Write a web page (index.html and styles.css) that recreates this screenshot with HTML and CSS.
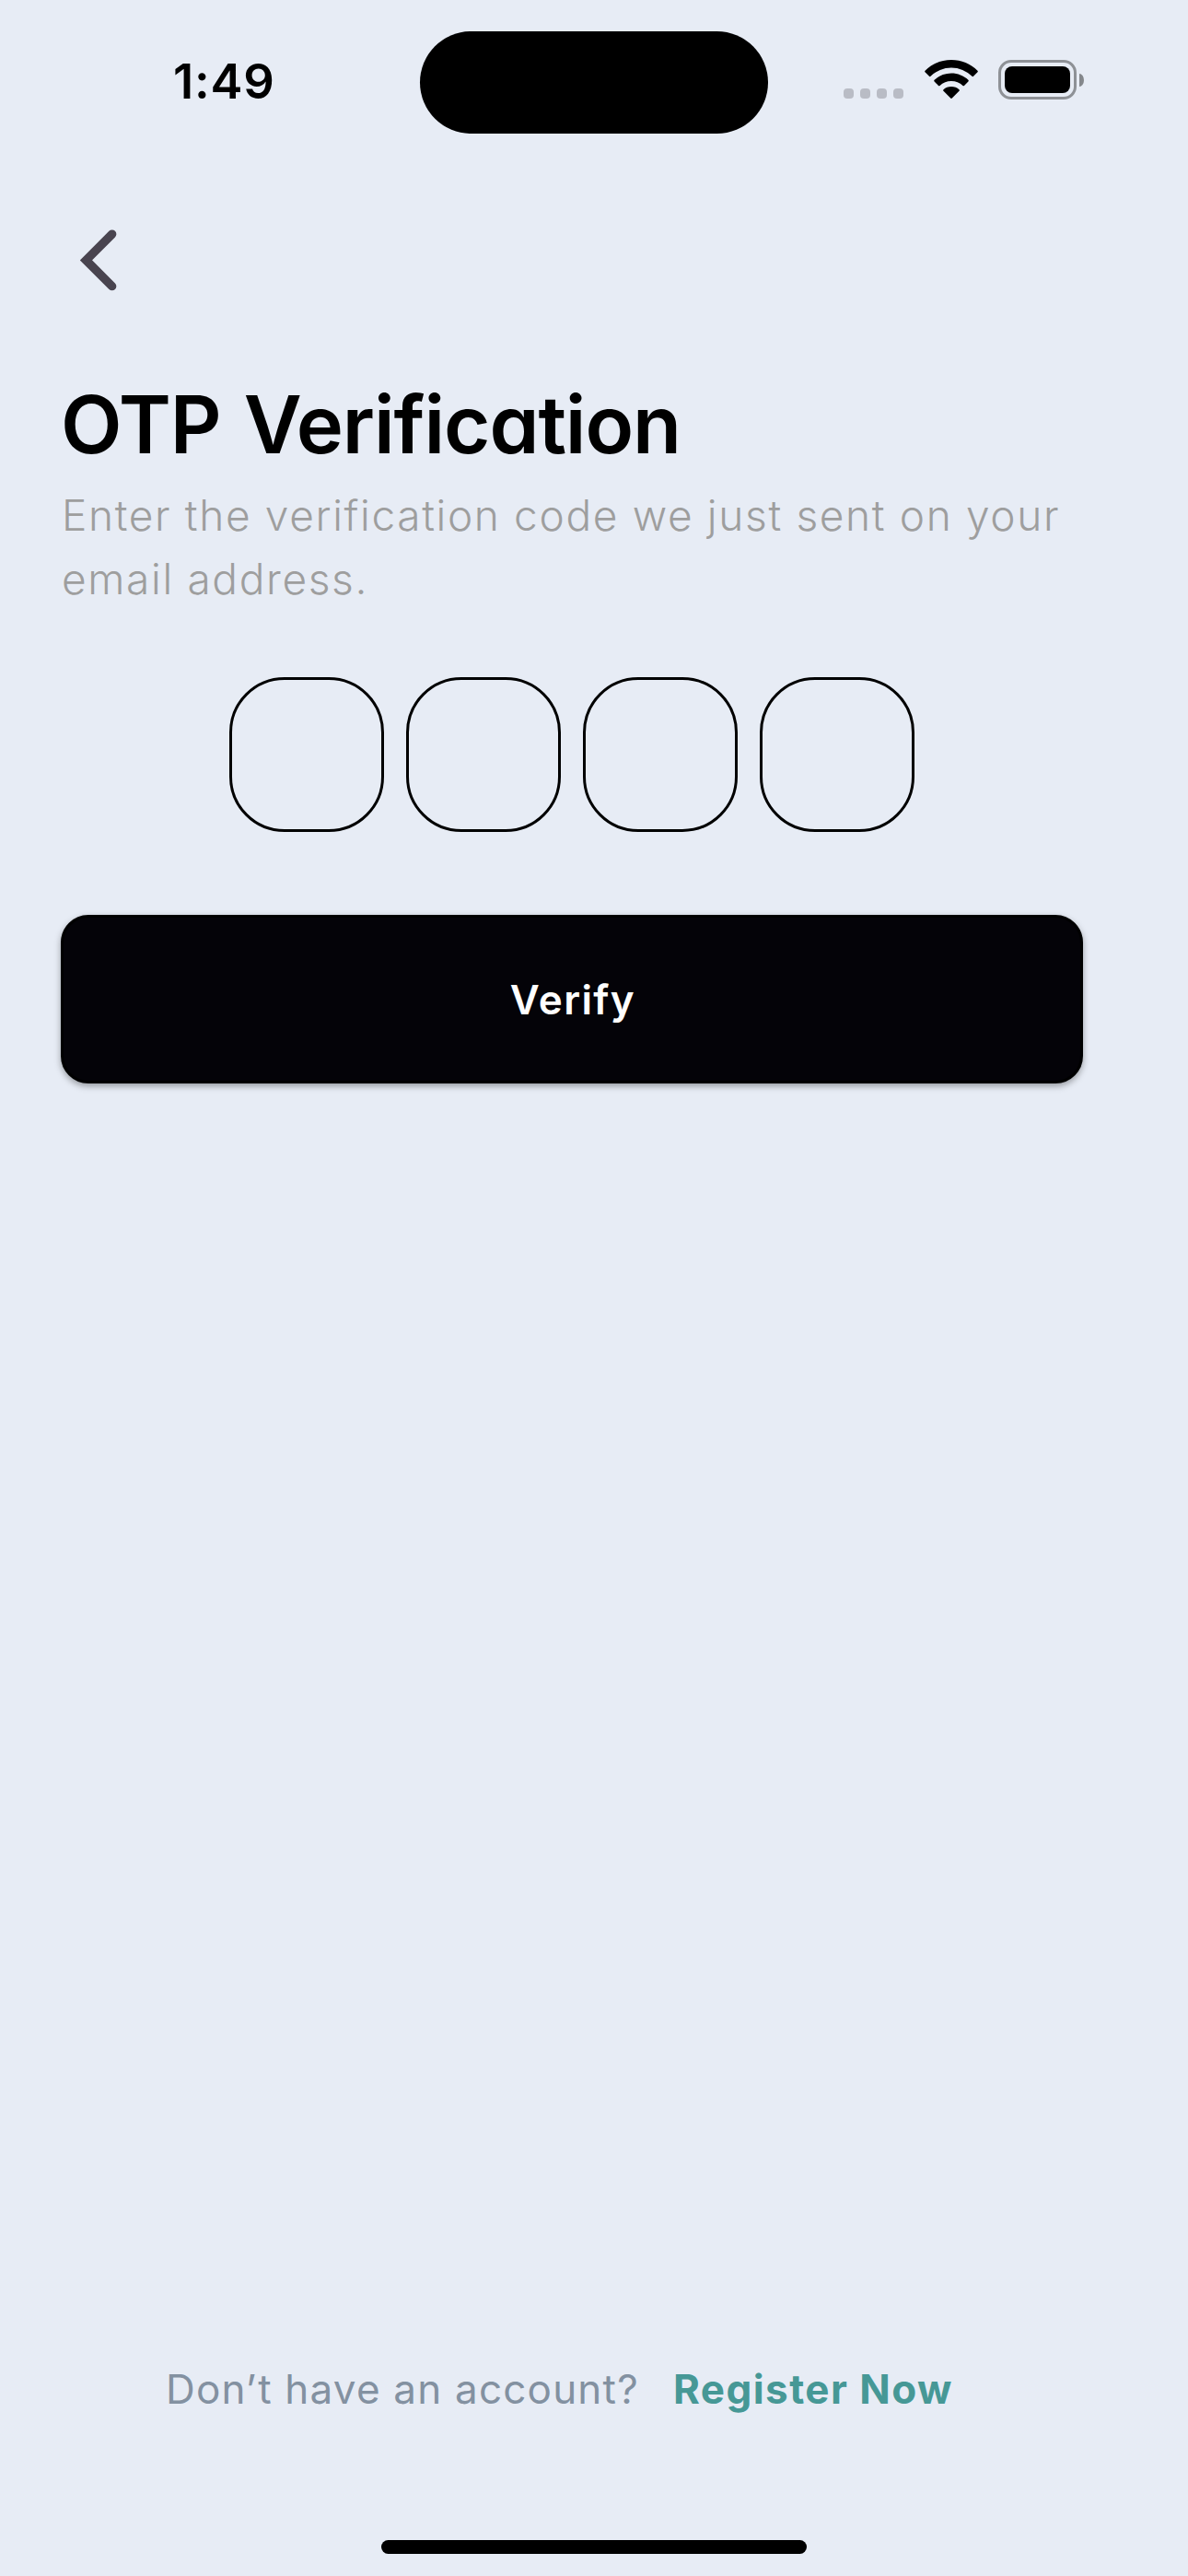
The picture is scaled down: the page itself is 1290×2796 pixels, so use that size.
FILE: index.html
```html
<!DOCTYPE html>
<html lang="en">
<head>
<meta charset="utf-8">
<title>OTP Verification</title>
<link rel="stylesheet" href="styles.css">
</head>
<body>
<div class="screen">
  <header class="status">
    <span class="time">1:49</span>
    <div class="island"></div>
    <div class="indicators">
      <div class="cellular"><i></i><i></i><i></i><i></i></div>
      <svg class="wifi" viewBox="0 0 58 42" width="58" height="42">
        <path d="M29 0C40 0 50 4.300 57.500 11.700Q58.200 12.500 57.500 13.300L53 17.800Q52.300 18.500 51.500 17.800A32 32 0 0 0 6.500 17.800Q5.700 18.500 5 17.800L.5 13.300Q-.2 12.500.5 11.700C8 4.300 18 0 29 0Z"/>
        <path d="M29 14.600C36 14.600 42.500 17.300 47.400 21.800Q48.200 22.600 47.400 23.400L43 27.900Q42.300 28.600 41.500 27.900A18.500 18.500 0 0 0 16.500 27.900Q15.700 28.600 15 27.900L10.600 23.400Q9.800 22.600 10.600 21.800C15.500 17.300 22 14.600 29 14.600Z"/>
        <path d="M29 29C32.300 29 35.300 30.200 37.500 32.200Q38.300 33 37.500 33.800L29.800 41.600Q29 42.400 28.200 41.600L20.500 33.800Q19.700 33 20.500 32.200C22.700 30.200 25.700 29 29 29Z"/>
      </svg>
      <div class="battery"><div class="shell"><div class="charge"></div></div><div class="nub"></div></div>
    </div>
  </header>
  <main class="content">
    <button class="back" aria-label="Back">
      <svg viewBox="0 0 42 68" width="42" height="68"><path d="M35.700 5.100 7.400 33.400 35.700 61.700"/></svg>
    </button>
    <h1 class="title">OTP Verification</h1>
    <p class="lead">Enter the verification code we just sent on your<br>email address.</p>
    <div class="code"><div class="digit"></div><div class="digit"></div><div class="digit"></div><div class="digit"></div></div>
    <button class="verify">Verify</button>
  </main>
  <footer class="footer">
    <span class="question">Don’t have an account?</span>
    <a class="register">Register Now</a>
  </footer>
  <div class="home"></div>
</div>
</body>
</html>
```
FILE: styles.css
```css
* { box-sizing: border-box; }
body {
  margin: 0;
  background: #e7ecf5;
  color: #000;
  font-family: Inter, "Liberation Sans", sans-serif;
}
button { border: 0; background: none; padding: 0; font: inherit; }
.screen { width: 1290px; height: 2796px; display: flex; flex-direction: column; }
.status {
  height: 178px;
  display: grid;
  grid-template-columns: 456px 378px 1fr;
  align-items: start;
}
.time {
  padding: 56px 0 0 188px;
  font-size: 52.500px;
  line-height: 64px;
  font-weight: 600;
  letter-spacing: .8px;
}
.island { height: 111px; margin-top: 33.500px; border-radius: 56px; background: #000; }
.indicators { display: flex; padding: 65px 0 0 82px; }
.cellular { display: flex; gap: 7px; padding-top: 31px; width: 88px; }
.cellular i { width: 11px; height: 11px; border-radius: 4px; background: #b9bcc5; }
.wifi { display: block; margin-right: 22px; }
.battery { display: flex; align-items: center; gap: 3px; height: 43px; }
.shell { width: 85px; height: 43px; border: 3px solid #8e9196; border-radius: 14px; padding: 4px; }
.charge { height: 29px; border-radius: 8px; background: #000; }
.nub { width: 5px; height: 14px; border-radius: 0 5px 5px 0 / 0 7px 7px 0; background: #84878b; }
.content { padding: 71px 114px 0 66px; }
.back { display: block; margin-left: 20px; height: 68px; }
.back svg { display: block; }
.back path { fill: none; stroke: #49444f; stroke-width: 9.300; stroke-linecap: round; stroke-linejoin: miter; }
.title {
  margin: 92px 0 0;
  font-size: 86.600px;
  line-height: 104px;
  font-weight: 600;
  letter-spacing: -1.100px;
  word-spacing: 4.500px;
  font-feature-settings: "cv11";
}
.lead {
  margin: 12px 0 0;
  padding-left: 1px;
  color: #9e9e9e;
  font-size: 46px;
  line-height: 69px;
  font-weight: 300;
  letter-spacing: 1.650px;
  white-space: nowrap;
}
.code { display: flex; justify-content: center; gap: 24px; margin-top: 72px; }
.digit { width: 168px; height: 168px; border: 3px solid #000; border-radius: 60px; }
.verify {
  display: block;
  width: 100%;
  height: 183px;
  margin-top: 90px;
  padding-left: 2px;
  border: 3px solid #000;
  border-radius: 30px;
  background: #040308;
  color: #fff;
  font-size: 44px;
  font-weight: 600;
  letter-spacing: 1.400px;
  box-shadow: 0 3px 7px rgba(0, 0, 0, .35);
}
.footer { display: flex; margin-top: auto; padding-left: 180px; font-size: 44px; line-height: 54px; white-space: nowrap; }
.question { width: 551px; color: #8391a1; letter-spacing: 1.200px; }
.register { color: #469896; font-weight: 700; letter-spacing: 1.450px; }
.home { width: 462px; height: 15px; margin: 137px auto 24px; border-radius: 8px; background: #000; }
```
